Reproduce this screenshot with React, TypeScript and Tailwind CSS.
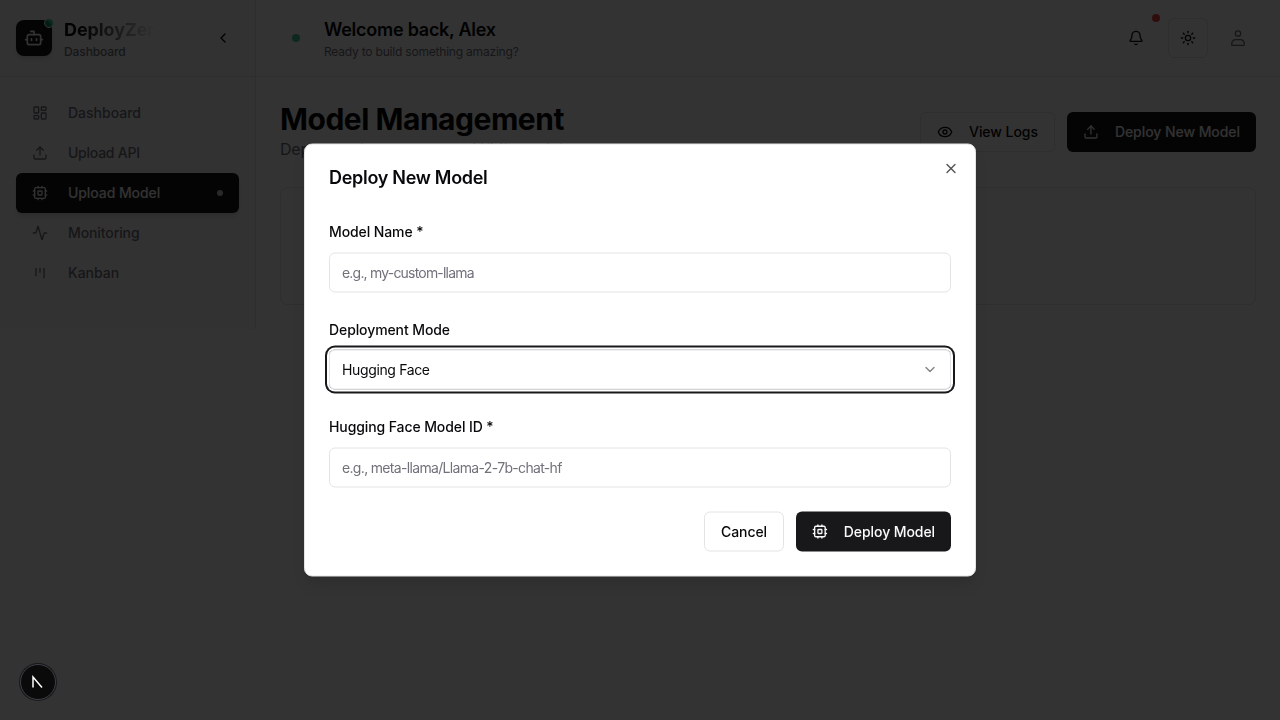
import React from 'react';
import { Activity, Bell, Bot, ChevronDown, ChevronLeft, Eye, LayoutDashboard, Sun, Upload, X } from 'lucide-react';

type IconProps = { size?: number; className?: string };

function Chip({ size = 16, className }: IconProps) {
  return (
    <svg width={size} height={size} viewBox="0 0 24 24" fill="none" stroke="currentColor" strokeWidth="2" strokeLinecap="round" strokeLinejoin="round" className={className}>
      <rect x="4" y="4" width="16" height="16" rx="2" />
      <rect x="9" y="9" width="6" height="6" rx="1" />
      <path d="M15 2v2M15 20v2M2 15h2M2 9h2M20 15h2M20 9h2M9 2v2M9 20v2" />
    </svg>
  );
}

function Board({ size = 16, className }: IconProps) {
  return (
    <svg width={size} height={size} viewBox="0 0 24 24" fill="none" stroke="currentColor" strokeWidth="2" strokeLinecap="round" className={className}>
      <path d="M6 5v11M12 5v6M18 5v14" />
    </svg>
  );
}

function Person() {
  return (
    <svg width="18" height="18" viewBox="0 0 18 18" fill="none" stroke="currentColor" strokeWidth="1.3" strokeLinejoin="round">
      <circle cx="9" cy="4.5" r="2.7" />
      <path d="M2.8 16.3v-1.8a3.8 3.8 0 0 1 3.8-3.8h4.8a3.8 3.8 0 0 1 3.8 3.8v1.8z" />
    </svg>
  );
}

const navItems = [
  { label: 'Dashboard', icon: LayoutDashboard, active: false, tracking: '' },
  { label: 'Upload API', icon: Upload, active: false, tracking: 'tracking-[-0.25px]' },
  { label: 'Upload Model', icon: Chip, active: true, tracking: 'tracking-[-0.08px]' },
  { label: 'Monitoring', icon: Activity, active: false, tracking: 'tracking-[-0.1px]' },
  { label: 'Kanban', icon: Board, active: false, tracking: '' },
];

function Sidebar() {
  return (
    <aside className="w-64 shrink-0 border-r border-zinc-200 bg-[#fafafa]">
      <div className="flex h-[77px] items-center justify-between border-b border-zinc-200 px-4">
        <div className="flex items-center gap-3">
          <div className="relative flex size-9 items-center justify-center rounded-lg bg-zinc-900 text-zinc-50 shadow-md">
            <Bot size={20} />
            <span className="absolute -top-0.5 -right-0.5 size-[10px] rounded-full border border-white bg-[#10b981]/80" />
          </div>
          <div>
            <p className="w-[92px] bg-gradient-to-r from-zinc-950 from-15% to-transparent bg-clip-text text-lg leading-7 font-bold tracking-[-0.1px] text-transparent">DeployZen</p>
            <p className="text-xs leading-4 font-medium tracking-[-0.1px] text-zinc-500">Dashboard</p>
          </div>
        </div>
        <button className="flex size-8 items-center justify-center"><ChevronLeft size={16} /></button>
      </div>
      <nav className="p-4">
        {navItems.map(({ label, icon: Icon, active, tracking }) => (
          <a key={label} className={active
            ? 'flex h-10 items-center rounded-md bg-zinc-900 px-4 text-sm font-medium text-zinc-50 shadow-md'
            : 'flex h-10 items-center rounded-md px-4 text-sm font-medium text-zinc-500'}>
            <Icon size={16} className="mr-5" />
            <span className={`flex-1 ${tracking}`}>{label}</span>
            {active && <span className="size-1.5 rounded-full bg-zinc-50 opacity-80" />}
          </a>
        ))}
      </nav>
    </aside>
  );
}

function Header() {
  return (
    <header className="flex h-[77px] items-center justify-between border-b border-zinc-200 px-6">
      <div className="flex items-center gap-6 pl-3">
        <span className="size-2 rounded-full bg-[#10b981]/80" />
        <div>
          <h2 className="text-lg leading-7 font-semibold tracking-[-0.25px]">Welcome back, Alex</h2>
          <p className="text-xs leading-4 tracking-[-0.2px] text-zinc-500">Ready to build something amazing?</p>
        </div>
      </div>
      <div className="flex items-center gap-3">
        <button className="relative flex size-10 items-center justify-center">
          <Bell size={16} />
          <span className="absolute -top-1 -right-1 size-2 rounded-full bg-[#ef4444]" />
        </button>
        <button className="flex size-10 items-center justify-center rounded-md border border-zinc-200"><Sun size={16} /></button>
        <button className="flex size-9 items-center justify-center text-zinc-500"><Person /></button>
      </div>
    </header>
  );
}

function Field({ label, className, children }: { label: string; className: string; children: React.ReactNode }) {
  return (
    <div className={`flex flex-col text-sm ${className}`}>
      <label className="leading-5 font-medium tracking-[-0.1px]">{label}</label>
      {children}
    </div>
  );
}

function DeployDialog() {
  return (
    <div role="dialog" className="absolute top-1/2 left-1/2 flex h-[433px] w-[672px] translate-x-[-50%] translate-y-[-50%] transform-[translateZ(0)] flex-col rounded-lg border border-zinc-200 bg-white p-6 shadow-lg">
      <button className="absolute top-4 right-4 flex size-4 items-center justify-center opacity-70"><X size={16} /></button>
      <h2 className="text-lg leading-[18px] font-semibold tracking-[-0.29px]">Deploy New Model</h2>
      <div className="mt-[35px] flex flex-col gap-[27px]">
        <Field label="Model Name *" className="gap-[11px]">
          <div className="flex h-10 items-center rounded-md border border-zinc-200 px-3 tracking-[-0.8px] text-zinc-500">e.g., my-custom-llama</div>
        </Field>
        <Field label="Deployment Mode" className="gap-[10px]">
          <div className="flex h-10 items-center justify-between rounded-md border border-zinc-200 px-3 ring-2 ring-zinc-900 ring-offset-2">
            <span className="tracking-[-0.36px]">Hugging Face</span><ChevronDown size={16} className="opacity-50" />
          </div>
        </Field>
        <Field label="Hugging Face Model ID *" className="gap-[11px]">
          <div className="flex h-10 items-center rounded-md border border-zinc-200 px-3 tracking-[-0.67px] text-zinc-500">e.g., meta-llama/Llama-2-7b-chat-hf</div>
        </Field>
      </div>
      <div className="mt-6 flex justify-end gap-3 text-sm font-medium tracking-[-0.08px]">
        <button className="h-10 w-20 rounded-md border border-zinc-200">Cancel</button>
        <button className="flex h-10 w-[155px] items-center gap-4 rounded-md bg-zinc-900 px-4 whitespace-nowrap text-zinc-50"><Chip />Deploy Model</button>
      </div>
    </div>
  );
}

export default function App() {
  return (
    <div className="relative h-[720px] w-[1280px] overflow-hidden bg-white font-['Inter',sans-serif] text-zinc-950">
      <div className="flex h-[329px]">
        <Sidebar />
        <div className="min-w-0 flex-1">
          <Header />
          <main className="p-6">
            <div className="flex items-center justify-between">
              <div className="pb-0.5">
                <h1 className="text-3xl leading-9 font-bold tracking-[-0.48px]">Model Management</h1>
                <p className="text-base leading-6 tracking-[-0.2px] text-zinc-500">Deploy and manage your AI/ML models</p>
              </div>
              <div className="flex gap-3 text-sm font-medium">
                <button className="flex h-10 w-[135px] items-center gap-4 rounded-md border border-zinc-200 px-4 tracking-[-0.05px] whitespace-nowrap"><Eye size={16} />View Logs</button>
                <button className="flex h-10 w-[189px] items-center gap-4 rounded-md bg-zinc-900 px-4 tracking-[-0.06px] whitespace-nowrap text-zinc-50"><Upload size={16} />Deploy New Model</button>
              </div>
            </div>
            <div className="mt-6 h-[118px] rounded-lg border border-zinc-200" />
          </main>
        </div>
      </div>
      <div className="absolute inset-0 bg-black/80" />
      <DeployDialog />
      <div className="absolute bottom-5 left-5 flex size-9 items-center justify-center rounded-full border border-zinc-700 bg-[#0a0a0a] ring-1 ring-zinc-900">
        <svg width="14" height="14" viewBox="0 0 14 14" fill="none" stroke="white" strokeWidth="1.5"><path d="M2 12.5V2L11 12.5" /></svg>
      </div>
    </div>
  );
}
